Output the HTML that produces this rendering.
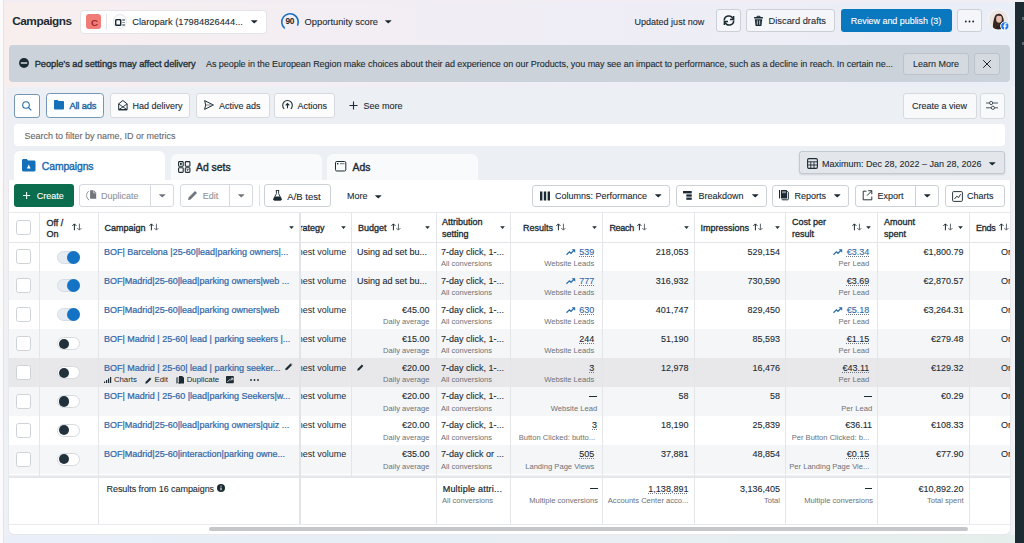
<!DOCTYPE html>
<html><head><meta charset="utf-8">
<style>
*{box-sizing:border-box;margin:0;padding:0}
html,body{width:1024px;height:543px;overflow:hidden}
body{position:relative;font-family:"Liberation Sans",sans-serif;color:#1c2b33;font-size:9px;
background:linear-gradient(90deg,#f8eeee 0%,#f3eef3 30%,#efedf5 55%,#eaeef7 100%)}
.a{position:absolute}
.t{position:absolute;white-space:nowrap}
.n{-webkit-text-stroke:0.1px currentColor}
.s{-webkit-text-stroke:0}
.sb{-webkit-text-stroke:0.32px currentColor}
svg{position:absolute;overflow:visible}
</style></head><body>

<div class="a" style="left:4px;top:86px;width:5px;height:457px;background:linear-gradient(180deg,#f3eff3 0%,#eff0f5 60%,#edf1f7 100%)"></div>
<div class="a" style="left:0px;top:0px;width:4px;height:543px;background:#fbfbfc;border-right:1px solid #e2e2e8"></div>
<div class="a" style="left:4px;top:0px;width:1011px;height:2px;background:#f1edf3"></div>
<div class="t" style="left:12.2px;top:15.61px;font-size:11.8px;line-height:11.8px;font-weight:bold;letter-spacing:-0.25px;color:#1c2b33;letter-spacing:-0.45px;">Campaigns</div>
<div class="a" style="left:79.8px;top:9.5px;width:187.2px;height:24.5px;background:#fff;border:1px solid #e2e4e8;border-radius:4px"></div>
<div class="a" style="left:86.2px;top:14.2px;width:15.099999999999994px;height:15.100000000000001px;background:#f07c78;border-radius:3px"></div>
<div class="t" style="left:90.9px;top:17.70px;font-size:9.8px;line-height:9.8px;font-weight:bold;letter-spacing:-0.25px;color:#a3262a;">C</div>
<div class="a" style="left:106.2px;top:13.7px;width:0.7999999999999972px;height:15.900000000000002px;background:#e3e5e8"></div>
<div class="a" style="left:112.6px;top:14.2px;width:14.200000000000003px;height:14.8px;background:#fafbfc;border:1px solid #e6e8eb;border-radius:50%"></div>
<svg style="left:114.6px;top:18.5px" width="11" height="7" viewBox="0 0 11 7"><rect x=".7" y=".7" width="5" height="5.6" rx=".6" fill="none" stroke="#1c2b33" stroke-width="1.4"/><path d="M2.2 1.5h2v3.5l-1-.8-1 .8z" fill="#fff"/><path d="M7.3 1h2.6M7.3 6h2.6" stroke="#1c2b33" stroke-width="1.1"/><path d="M7.3 3.5h2.6" stroke="#8a9197" stroke-width="1"/></svg>
<div class="t n" style="left:132.3px;top:18.33px;font-size:9.3px;line-height:9.3px;color:#1c2b33;">Claropark (17984826444...</div>
<svg style="left:251.2px;top:20.4px" width="6.5" height="3.64" viewBox="0 0 7 4"><path d="M.3.2h6.4c.25 0 .4.3.2.5L3.8 3.7c-.15.15-.45.15-.6 0L.1.7C-.1.5.05.2.3.2z" fill="#1c2b33"/></svg>
<svg style="left:280px;top:11.8px" width="20" height="20" viewBox="0 0 20 20"><path d="M4.3 15.95 A8.25 8.25 0 1 1 17.7 12.95" fill="none" stroke="#1a6fc4" stroke-width="1.6" stroke-linecap="round"/></svg>
<div class="t" style="left:285.5px;top:17.47px;font-size:8.3px;line-height:8.3px;font-weight:bold;letter-spacing:-0.25px;color:#1c2b33;letter-spacing:-0.3px;">90</div>
<div class="t n" style="left:304.6px;top:18.23px;font-size:9.3px;line-height:9.3px;color:#1c2b33;">Opportunity score</div>
<svg style="left:385.2px;top:20.4px" width="6.5" height="3.64" viewBox="0 0 7 4"><path d="M.3.2h6.4c.25 0 .4.3.2.5L3.8 3.7c-.15.15-.45.15-.6 0L.1.7C-.1.5.05.2.3.2z" fill="#1c2b33"/></svg>
<div class="t n" style="left:634.6px;top:17.68px;font-size:9px;line-height:9px;color:#1c2b33;">Updated just now</div>
<div class="a" style="left:716px;top:9px;width:25px;height:23px;border:1px solid #cbd0d6;border-radius:3px;background:#f8f9fb;background:#f5f6f9"></div>
<svg style="left:722.5px;top:15px" width="12" height="11" viewBox="0 0 12 11"><path d="M1.3 5.5A4.5 4.5 0 0 1 9.9 3.6" fill="none" stroke="#1c2b33" stroke-width="1.5"/><path d="M10.7 5.5A4.5 4.5 0 0 1 2.1 7.4" fill="none" stroke="#1c2b33" stroke-width="1.5"/><path d="M10.6 .9v3.6H7" fill="none" stroke="#1c2b33" stroke-width="1.5" stroke-linejoin="miter"/><path d="M1.4 10.1V6.5H5" fill="none" stroke="#1c2b33" stroke-width="1.5"/></svg>
<div class="a" style="left:746px;top:9px;width:89px;height:23px;border:1px solid #cbd0d6;border-radius:3px;background:#f8f9fb;background:#f5f6f9"></div>
<svg style="left:753.8px;top:15.8px" width="9" height="10" viewBox="0 0 9 10"><path d="M3 1V.3h3V1" fill="none" stroke="#1c2b33" stroke-width="1"/><rect x="0" y="1" width="9" height="1.6" rx=".5" fill="#1c2b33"/><path d="M.8 3.2h7.4l-.7 6.2c0 .3-.3.6-.7.6H2.2c-.4 0-.7-.3-.7-.6z" fill="#1c2b33"/><path d="M3.3 4.4v4.3M5.7 4.4v4.3" stroke="#eef1f6" stroke-width=".8"/></svg>
<div class="t n" style="left:768.6px;top:17.03px;font-size:9.3px;line-height:9.3px;color:#1c2b33;">Discard drafts</div>
<div class="a" style="left:841px;top:9px;width:111px;height:23px;background:#0a78be;border-radius:3px"></div>
<div class="t n" style="left:850.8px;top:17.08px;font-size:9px;line-height:9px;color:#fff;letter-spacing:-0.05px;">Review and publish (3)</div>
<div class="a" style="left:957px;top:9px;width:25px;height:23px;border:1px solid #cbd0d6;border-radius:3px;background:#f8f9fb;background:#f5f6f9"></div>
<svg style="left:963px;top:19.5px" width="13" height="3" viewBox="0 0 13 3"><circle cx="2.8" cy="1.5" r="0.95" fill="#1c2b33"/><circle cx="6.5" cy="1.5" r="0.95" fill="#1c2b33"/><circle cx="10.2" cy="1.5" r="0.95" fill="#1c2b33"/></svg>
<svg style="left:987.5px;top:9px" width="22" height="22" viewBox="0 0 22 22"><defs><clipPath id="av"><circle cx="10.5" cy="10.5" r="9.8"/></clipPath></defs><circle cx="10.5" cy="10.5" r="10.3" fill="#fff"/><g clip-path="url(#av)"><rect width="22" height="22" fill="#ece7e4"/><path d="M5 22c-.5-6 .5-12 2-15 1.2-2.3 5-3 7-.8 1.8 2 2 7 2.5 10 .3 2 .8 4 1.2 5.8z" fill="#3a271f"/><ellipse cx="11" cy="10" rx="2.9" ry="3.8" fill="#e2bfae"/><path d="M8 6.5c1.2-1.5 4.5-1.5 5.6.6-1.5-.3-3.5-.3-5.6-.6z" fill="#3a271f"/><path d="M7.5 22c.5-3 1.8-5 3.5-5.5s3 1 3.8 5.5z" fill="#2b2220"/></g><circle cx="16.8" cy="17" r="4.2" fill="#1877f2" stroke="#fff" stroke-width="1"/><path d="M17.4 21.2v-3.4h1.1l.2-1.2h-1.3v-.8c0-.35.12-.6.6-.6h.75v-1.05a7 7 0 0 0-1-.08c-1 0-1.6.6-1.6 1.6v.93h-1.05v1.2h1.05v3.4" fill="#fff"/></svg>
<div class="a" style="left:9px;top:45px;width:1001px;height:37px;background:#cbd2d9;border-radius:4px"></div>
<svg style="left:19px;top:58px" width="10" height="10" viewBox="0 0 10 10"><circle cx="5" cy="5" r="4.95" fill="#1c2b33"/><rect x="1.8" y="4.3" width="6.4" height="1.4" fill="#e4e8ec"/></svg>
<div class="t sb" style="left:34.7px;top:59.83px;font-size:9.3px;line-height:9.3px;color:#1c2b33;letter-spacing:-0.05px;">People’s ad settings may affect delivery</div>
<div class="t n" style="left:206px;top:60.08px;font-size:9px;line-height:9px;color:#1c2b33;letter-spacing:-0.055px;">As people in the European Region make choices about their ad experience on our Products, you may see an impact to performance, such as a decline in reach. In certain ne...</div>
<div class="a" style="left:903px;top:52.5px;width:66px;height:22.0px;border:1px solid #cbd0d6;border-radius:3px;background:#f8f9fb;background:#d4dae0;border-color:#bcc3cb"></div>
<div class="t n" style="left:913px;top:60.08px;font-size:9px;line-height:9px;color:#1c2b33;">Learn More</div>
<div class="a" style="left:974px;top:52.5px;width:26px;height:22.0px;border:1px solid #cbd0d6;border-radius:3px;background:#f8f9fb;background:#d4dae0;border-color:#bcc3cb"></div>
<svg style="left:982px;top:58.5px" width="10" height="10" viewBox="0 0 10 10"><path d="M1.2 1.2l7.6 7.6M8.8 1.2l-7.6 7.6" stroke="#1c2b33" stroke-width="1"/></svg>
<div class="a" style="left:7px;top:86.5px;width:1006px;height:93.5px;background:#eceff3;border-radius:6px 6px 0 0"></div>
<div class="a" style="left:14px;top:94px;width:26px;height:23.5px;background:#fff;border:1px solid #7596b3;border-radius:3px"></div>
<svg style="left:22px;top:101px" width="10" height="10" viewBox="0 0 10 10"><circle cx="4" cy="4" r="3.3" fill="none" stroke="#2a6ea6" stroke-width="1.1"/><path d="M6.4 6.4l2.9 2.9" stroke="#2a6ea6" stroke-width="1.2"/></svg>
<div class="a" style="left:46px;top:92.6px;width:58px;height:25.80000000000001px;background:#fbfdff;border:1px solid #7497b5;border-radius:3.5px"></div>
<svg style="left:53.7px;top:100.3px" width="10" height="9.4" viewBox="0 0 10 9.4"><path d="M0 1C0 .45.45 0 1 0h2.5l1.1 1.1H9c.55 0 1 .45 1 1v6.3c0 .55-.45 1-1 1H1c-.55 0-1-.45-1-1z" fill="#1470b8"/></svg>
<div class="t sb" style="left:69.4px;top:101.63px;font-size:9.3px;line-height:9.3px;color:#1a66a6;letter-spacing:-0.15px;-webkit-text-stroke:0.4px currentColor;">All ads</div>
<div class="a" style="left:109.5px;top:92.6px;width:80.5px;height:25.80000000000001px;background:#fcfcfd;border:1px solid #d6dadf;border-radius:3px"></div>
<svg style="left:117.5px;top:99.8px" width="10" height="10.5" viewBox="0 0 10 10.5"><path d="M.7 3.8L4.9.5l4.2 3.3v5.9H.7z" fill="none" stroke="#1c2b33" stroke-width="1"/><path d="M.7 3.8L4.9 6.9 9.1 3.8M.7 9.7L4.9 6.9 9.1 9.7" fill="none" stroke="#1c2b33" stroke-width=".9"/><path d="M.7 9.7h8.4" stroke="#1c2b33" stroke-width="1.2"/></svg>
<div class="t n" style="left:132.5px;top:101.88px;font-size:9px;line-height:9px;color:#1c2b33;">Had delivery</div>
<div class="a" style="left:195.5px;top:92.6px;width:74.5px;height:25.80000000000001px;background:#fcfcfd;border:1px solid #d6dadf;border-radius:3px"></div>
<svg style="left:204px;top:100px" width="10" height="10" viewBox="0 0 10 10"><path d="M.6.6L9.4 5 .6 9.4 1.7 5z" fill="none" stroke="#1c2b33" stroke-width="1" stroke-linejoin="round"/><path d="M1.7 5h7.7" stroke="#6d7379" stroke-width=".9"/></svg>
<div class="t n" style="left:219px;top:101.88px;font-size:9px;line-height:9px;color:#1c2b33;">Active ads</div>
<div class="a" style="left:273.8px;top:92.6px;width:61.39999999999998px;height:25.80000000000001px;background:#fcfcfd;border:1px solid #d6dadf;border-radius:3px"></div>
<svg style="left:282px;top:99.8px" width="11" height="10" viewBox="0 0 11 10"><path d="M2.2 8.8A4.8 4.8 0 1 1 8.8 8.8" fill="none" stroke="#1c2b33" stroke-width="1.1"/><path d="M5.5 8.2V3.5M3.7 5.3l1.8-1.8 1.8 1.8" fill="none" stroke="#1c2b33" stroke-width="1.1"/></svg>
<div class="t n" style="left:297.5px;top:101.58px;font-size:9px;line-height:9px;color:#1c2b33;">Actions</div>
<svg style="left:349px;top:101px" width="9" height="9" viewBox="0 0 9 9"><path d="M4.5 .5v8M.5 4.5h8" stroke="#1c2b33" stroke-width="1.1"/></svg>
<div class="t n" style="left:363.5px;top:102.08px;font-size:9px;line-height:9px;color:#1c2b33;">See more</div>
<div class="a" style="left:902.5px;top:92.5px;width:74.0px;height:26.0px;background:#f8f9fb;border:1px solid #d6dadf;border-radius:3px"></div>
<div class="t n" style="left:912px;top:102.38px;font-size:9px;line-height:9px;color:#1c2b33;">Create a view</div>
<div class="a" style="left:979.5px;top:92.5px;width:25.0px;height:26.0px;background:#f8f9fb;border:1px solid #d6dadf;border-radius:3px"></div>
<svg style="left:986px;top:101.2px" width="12" height="9" viewBox="0 0 12 9"><path d="M0 2h3.3M6.9 2H12M0 6.8h5.1M8.7 6.8H12" stroke="#1c2b33" stroke-width=".8"/><circle cx="5.1" cy="2" r="1.6" fill="none" stroke="#1c2b33" stroke-width=".8"/><circle cx="6.9" cy="6.8" r="1.6" fill="none" stroke="#1c2b33" stroke-width=".8"/></svg>
<div class="a" style="left:13.7px;top:123.6px;width:991.3px;height:22.900000000000006px;background:#fff;border-radius:4px"></div>
<div class="t n" style="left:24.4px;top:131.68px;font-size:9px;line-height:9px;color:#65676b;">Search to filter by name, ID or metrics</div>
<div class="a" style="left:14px;top:150.7px;width:151.3px;height:31.30000000000001px;background:#fff;border-radius:6px 6px 0 0"></div>
<svg style="left:22.2px;top:159.1px" width="13.5" height="12.4" viewBox="0 0 13.5 12.4"><path d="M0 1.3C0 .6.6 0 1.3 0h3.4l1.4 1.6h6.1c.7 0 1.3.6 1.3 1.3v8.2c0 .7-.6 1.3-1.3 1.3H1.3C.6 12.4 0 11.8 0 11.1z" fill="#1470b8"/><path d="M6.75 5.4L8.6 9.4H4.9z" fill="#fff"/></svg>
<div class="t sb" style="left:41.8px;top:162.40px;font-size:10.4px;line-height:10.4px;color:#1a6aae;letter-spacing:-0.1px;-webkit-text-stroke:0.38px currentColor;">Campaigns</div>
<div class="a" style="left:171px;top:154px;width:151.2px;height:26px;background:#f9fafb;border-radius:6px 6px 0 0"></div>
<svg style="left:178px;top:160.5px" width="12.5" height="12" viewBox="0 0 12.5 12"><rect x=".6" y=".6" width="4.6" height="4.6" rx=".8" fill="none" stroke="#1c2b33" stroke-width="1.1"/><rect x="7.3" y=".6" width="4.6" height="4.6" rx=".8" fill="none" stroke="#1c2b33" stroke-width="1.1"/><rect x=".6" y="6.8" width="4.6" height="4.6" rx=".8" fill="none" stroke="#1c2b33" stroke-width="1.1"/><rect x="7.3" y="6.8" width="4.6" height="4.6" rx=".8" fill="none" stroke="#1c2b33" stroke-width="1.1"/><rect x="2" y="2" width="1.8" height="1.8" fill="#1c2b33"/><path d="M8.3 8.3h2.6l-1.3 1.8z" fill="#1c2b33"/></svg>
<div class="t sb" style="left:196px;top:162.60px;font-size:10.4px;line-height:10.4px;color:#1c2b33;-webkit-text-stroke:0.38px currentColor;">Ad sets</div>
<div class="a" style="left:327.3px;top:154px;width:150.39999999999998px;height:26px;background:#f9fafb;border-radius:6px 6px 0 0"></div>
<svg style="left:335.3px;top:161.1px" width="11.3" height="10.5" viewBox="0 0 11.3 10.5"><rect x=".5" y=".5" width="10.3" height="9.5" rx="1.3" fill="none" stroke="#1c2b33" stroke-width="1"/><rect x="2" y="2" width="1.4" height="1.4" fill="#1c2b33"/><path d="M5 2.7h4.5" stroke="#6d7379" stroke-width="1"/></svg>
<div class="t sb" style="left:352.5px;top:162.60px;font-size:10.4px;line-height:10.4px;color:#1c2b33;-webkit-text-stroke:0.38px currentColor;">Ads</div>
<div class="a" style="left:799.4px;top:151.3px;width:205.60000000000002px;height:23.0px;background:#e3e7ec;border:1px solid #c3c9d0;border-radius:3px;box-shadow:0 1px 2px rgba(0,0,0,.12)"></div>
<svg style="left:807px;top:157.5px" width="11" height="11" viewBox="0 0 11 11"><rect x=".6" y=".6" width="9.8" height="9.8" rx="1.3" fill="none" stroke="#1c2b33" stroke-width="1.1"/><path d="M.6 3.8h9.8M.6 7h9.8M3.8 3.8v6.6M7 3.8v6.6" stroke="#1c2b33" stroke-width=".9"/></svg>
<div class="t n" style="left:822px;top:159.58px;font-size:9px;line-height:9px;color:#1c2b33;">Maximum: Dec 28, 2022 – Jan 28, 2026</div>
<svg style="left:988.5px;top:161.5px" width="6.5" height="3.64" viewBox="0 0 7 4"><path d="M.3.2h6.4c.25 0 .4.3.2.5L3.8 3.7c-.15.15-.45.15-.6 0L.1.7C-.1.5.05.2.3.2z" fill="#1c2b33"/></svg>
<div class="a" style="left:7.5px;top:180px;width:1003.0px;height:354.79999999999995px;background:#fff;border:1px solid #e6e8ec;border-top:none;border-radius:0 0 6px 6px"></div>
<div class="a" style="left:14px;top:184px;width:60px;height:22.5px;background:#0b6c4e;border-radius:3px"></div>
<svg style="left:23px;top:192.3px" width="7.2" height="7" viewBox="0 0 7.2 7"><path d="M3.6 0v7M0 3.5h7.2" stroke="#eafaf3" stroke-width="1.1"/></svg>
<div class="t n" style="left:36.8px;top:192.08px;font-size:9px;line-height:9px;color:#fff;">Create</div>
<div class="a" style="left:79px;top:184px;width:95.4px;height:22.5px;background:#fff;border:1px solid #d6dadf;border-radius:3px"></div>
<div class="a" style="left:150px;top:184.5px;width:1px;height:21.5px;background:#d6dadf"></div>
<svg style="left:86px;top:190.3px" width="11" height="10.5" viewBox="0 0 11 10.5"><path d="M4.1.2h3.6l2.5 2.6v6H4.1z" fill="#6f757b"/><path d="M7.5.2v2.8h2.7" fill="none" stroke="#fff" stroke-width=".5"/><path d="M2.6 1.2C1 2.5.6 4 .6 5.5s.5 3.3 2.6 4.6" fill="none" stroke="#7d8389" stroke-width=".9"/></svg>
<div class="t n" style="left:101px;top:192.08px;font-size:9px;line-height:9px;color:#8d949b;">Duplicate</div>
<svg style="left:159px;top:194.2px" width="6.5" height="3.64" viewBox="0 0 7 4"><path d="M.3.2h6.4c.25 0 .4.3.2.5L3.8 3.7c-.15.15-.45.15-.6 0L.1.7C-.1.5.05.2.3.2z" fill="#70767d"/></svg>
<div class="a" style="left:180.3px;top:184px;width:72.89999999999998px;height:22.5px;background:#fff;border:1px solid #d6dadf;border-radius:3px"></div>
<div class="a" style="left:228.5px;top:184.5px;width:1.0px;height:21.5px;background:#d6dadf"></div>
<svg style="left:187px;top:190px" width="11" height="11" viewBox="0 0 11 11"><path d="M1 10l.6-2.6L8 1l2 2-6.4 6.4z" fill="#70767d"/></svg>
<div class="t n" style="left:202.7px;top:192.08px;font-size:9px;line-height:9px;color:#8d949b;">Edit</div>
<svg style="left:238.3px;top:194.2px" width="6.5" height="3.64" viewBox="0 0 7 4"><path d="M.3.2h6.4c.25 0 .4.3.2.5L3.8 3.7c-.15.15-.45.15-.6 0L.1.7C-.1.5.05.2.3.2z" fill="#70767d"/></svg>
<div class="a" style="left:258.8px;top:185px;width:1.0px;height:21px;background:#dcdfe3"></div>
<div class="a" style="left:264.2px;top:184px;width:67.0px;height:22.5px;background:#fff;border:1px solid #cdd2d8;border-radius:3px"></div>
<svg style="left:272.5px;top:190.2px" width="9" height="10.5" viewBox="0 0 9 10.5"><path d="M2.8.5h3.4M3.4.5v3.2L.7 8.8c-.4.8 0 1.4.8 1.4h6c.8 0 1.2-.6.8-1.4L5.6 3.7V.5" fill="none" stroke="#1c2b33" stroke-width=".9"/><path d="M1.9 6.6h5.2l1.4 2.4c.3.6 0 1.2-.7 1.2H1.2c-.7 0-1-.6-.7-1.2z" fill="#1c2b33"/></svg>
<div class="t n" style="left:287.3px;top:191.66px;font-size:9.5px;line-height:9.5px;color:#1c2b33;">A/B test</div>
<div class="t n" style="left:347px;top:192.08px;font-size:9px;line-height:9px;color:#1c2b33;">More</div>
<svg style="left:374.5px;top:194.5px" width="6.5" height="3.64" viewBox="0 0 7 4"><path d="M.3.2h6.4c.25 0 .4.3.2.5L3.8 3.7c-.15.15-.45.15-.6 0L.1.7C-.1.5.05.2.3.2z" fill="#1c2b33"/></svg>
<div class="a" style="left:532.2px;top:184.5px;width:137.79999999999995px;height:22.5px;background:#fff;border:1px solid #cdd2d8;border-radius:3px"></div>
<svg style="left:540px;top:190.5px" width="10" height="10" viewBox="0 0 10 10"><rect x="0" y=".5" width="2.4" height="9" fill="#1c2b33"/><rect x="3.8" y=".5" width="2.4" height="9" fill="#1c2b33"/><rect x="7.6" y=".5" width="2.4" height="9" fill="#1c2b33"/></svg>
<div class="t n" style="left:555px;top:192.38px;font-size:9px;line-height:9px;color:#1c2b33;">Columns: Performance</div>
<svg style="left:654.5px;top:194.3px" width="6.5" height="3.64" viewBox="0 0 7 4"><path d="M.3.2h6.4c.25 0 .4.3.2.5L3.8 3.7c-.15.15-.45.15-.6 0L.1.7C-.1.5.05.2.3.2z" fill="#1c2b33"/></svg>
<div class="a" style="left:675.5px;top:184.5px;width:91.10000000000002px;height:22.5px;background:#fff;border:1px solid #cdd2d8;border-radius:3px"></div>
<svg style="left:683.2px;top:191.1px" width="9" height="9" viewBox="0 0 9 9"><rect x="0" y="0" width="8.7" height="2.4" fill="#1c2b33"/><rect x="3.4" y="2.4" width="5.3" height="6.3" fill="#9aa0a6"/><rect x="3.4" y="3.7" width="5.3" height="1.7" fill="#1c2b33"/><rect x="3.4" y="7" width="5.3" height="1.7" fill="#1c2b33"/></svg>
<div class="t n" style="left:698.5px;top:192.38px;font-size:9px;line-height:9px;color:#1c2b33;">Breakdown</div>
<svg style="left:751.5px;top:194.3px" width="6.5" height="3.64" viewBox="0 0 7 4"><path d="M.3.2h6.4c.25 0 .4.3.2.5L3.8 3.7c-.15.15-.45.15-.6 0L.1.7C-.1.5.05.2.3.2z" fill="#1c2b33"/></svg>
<div class="a" style="left:771.7px;top:184.5px;width:77.79999999999995px;height:22.5px;background:#fff;border:1px solid #cdd2d8;border-radius:3px"></div>
<svg style="left:779px;top:190.3px" width="11" height="10" viewBox="0 0 11 10"><rect x="0" y="0" width="1.1" height="8.4" fill="#1c2b33"/><path d="M7 1.6h1.6c.4 0 .7.3.7.7v6.8c0 .4-.3.7-.7.7H3.6c-.4 0-.7-.3-.7-.7V9" fill="none" stroke="#1c2b33" stroke-width="1"/><rect x="2" y="0" width="6" height="8.6" rx=".6" fill="#1c2b33"/><rect x="3" y="1.2" width="4" height="2" fill="#8b939a"/></svg>
<div class="t n" style="left:794.5px;top:192.38px;font-size:9px;line-height:9px;color:#1c2b33;">Reports</div>
<svg style="left:834.3px;top:194.3px" width="6.5" height="3.64" viewBox="0 0 7 4"><path d="M.3.2h6.4c.25 0 .4.3.2.5L3.8 3.7c-.15.15-.45.15-.6 0L.1.7C-.1.5.05.2.3.2z" fill="#1c2b33"/></svg>
<div class="a" style="left:854.7px;top:184.5px;width:84.29999999999995px;height:22.5px;background:#fff;border:1px solid #cdd2d8;border-radius:3px"></div>
<div class="a" style="left:914.5px;top:185px;width:1.0px;height:21.5px;background:#cdd2d8"></div>
<svg style="left:862px;top:190px" width="11" height="11" viewBox="0 0 11 11"><path d="M4.5 1.2H1.2v8.6H9.8V6.5" fill="none" stroke="#1c2b33" stroke-width=".95"/><path d="M6.2 .7h3.6v3.6M9.7.9L5 5.6" fill="none" stroke="#1c2b33" stroke-width=".95"/></svg>
<div class="t n" style="left:877.5px;top:192.38px;font-size:9px;line-height:9px;color:#1c2b33;">Export</div>
<svg style="left:924px;top:194.3px" width="6.5" height="3.64" viewBox="0 0 7 4"><path d="M.3.2h6.4c.25 0 .4.3.2.5L3.8 3.7c-.15.15-.45.15-.6 0L.1.7C-.1.5.05.2.3.2z" fill="#1c2b33"/></svg>
<div class="a" style="left:944.7px;top:184.5px;width:59.89999999999998px;height:22.5px;background:#fff;border:1px solid #cdd2d8;border-radius:3px"></div>
<svg style="left:951.5px;top:190.5px" width="11" height="11" viewBox="0 0 11 11"><rect x=".6" y=".6" width="9.8" height="9.8" rx="1" fill="none" stroke="#1c2b33" stroke-width=".95"/><path d="M2.5 8l2.3-2.8 1.8 1.3L8.6 3.2" fill="none" stroke="#1c2b33" stroke-width=".95"/></svg>
<div class="t n" style="left:967px;top:192.38px;font-size:9px;line-height:9px;color:#1c2b33;">Charts</div>
<div class="a" style="left:9px;top:271.3px;width:1001px;height:28.899999999999977px;background:#f5f6f8"></div>
<div class="a" style="left:9px;top:329.1px;width:1001px;height:28.899999999999977px;background:#f5f6f8"></div>
<div class="a" style="left:9px;top:358.0px;width:1001px;height:28.899999999999977px;background:#e8e8ea"></div>
<div class="a" style="left:9px;top:386.9px;width:1001px;height:28.899999999999977px;background:#f5f6f8"></div>
<div class="a" style="left:9px;top:444.7px;width:1001px;height:28.899999999999977px;background:#f5f6f8"></div>
<div class="a" style="left:9px;top:212px;width:1001px;height:1px;background:#e6e8eb"></div>
<div class="a" style="left:9px;top:241.8px;width:1001px;height:1.0px;background:#e3e5e8"></div>
<div class="a" style="left:9px;top:475.2px;width:1001px;height:2.400000000000034px;background:linear-gradient(180deg,#f1f2f4,#dfe1e4)"></div>
<div class="a" style="left:9px;top:523.5px;width:1001px;height:1.0px;background:#e8eaed"></div>
<div class="a" style="left:38.9px;top:212px;width:1.0px;height:264px;background:#e3e5e8"></div>
<div class="a" style="left:97.9px;top:212px;width:1.0px;height:312px;background:#e3e5e8"></div>
<div class="a" style="left:351.0px;top:212px;width:1.0px;height:264px;background:#e3e5e8"></div>
<div class="a" style="left:435.7px;top:212px;width:1.0px;height:312px;background:#e3e5e8"></div>
<div class="a" style="left:510.0px;top:212px;width:1.0px;height:312px;background:#e3e5e8"></div>
<div class="a" style="left:601.8px;top:212px;width:1.0px;height:312px;background:#e3e5e8"></div>
<div class="a" style="left:693.7px;top:212px;width:1.0px;height:312px;background:#e3e5e8"></div>
<div class="a" style="left:784.9px;top:212px;width:1.0px;height:312px;background:#e3e5e8"></div>
<div class="a" style="left:876.8px;top:212px;width:1.0px;height:312px;background:#e3e5e8"></div>
<div class="a" style="left:968.9px;top:212px;width:1.0px;height:312px;background:#e3e5e8"></div>
<div class="a" style="left:299.3px;top:212px;width:1.599999999999966px;height:312px;background:#e2e4e7"></div>
<div class="a" style="left:16.3px;top:220px;width:15.0px;height:15px;background:#fff;border:1px solid #cfd3d8;border-radius:2.5px"></div>
<div class="t sb" style="left:46.5px;top:218.58px;font-size:9px;line-height:9px;color:#1c2b33;">Off /</div>
<div class="t sb" style="left:46.5px;top:230.08px;font-size:9px;line-height:9px;color:#1c2b33;">On</div>
<svg style="left:72.2px;top:223px" width="10" height="8" viewBox="0 0 10 8"><path d="M2.4 7.3V.9M.4 2.9l2-2 2 2" fill="none" stroke="#1c2b33" stroke-width="1"/><path d="M7.4.7v6.4M5.4 5.1l2 2 2-2" fill="none" stroke="#5f666d" stroke-width="1"/></svg>
<div class="t sb" style="left:104.5px;top:224.08px;font-size:9px;line-height:9px;color:#1c2b33;">Campaign</div>
<svg style="left:149.1px;top:223px" width="10" height="8" viewBox="0 0 10 8"><path d="M2.4 7.3V.9M.4 2.9l2-2 2 2" fill="none" stroke="#1c2b33" stroke-width="1"/><path d="M7.4.7v6.4M5.4 5.1l2 2 2-2" fill="none" stroke="#5f666d" stroke-width="1"/></svg>
<svg style="left:289px;top:226px" width="5" height="3" viewBox="0 0 5 3"><path d="M.2.2h4.6L2.5 2.9z" fill="#1c2b33"/></svg>
<div class="a" style="left:300.8px;top:219px;width:40px;height:16px;overflow:hidden"><div class="t sb" style="right:16.2px;top:5.08px;font-size:9px;line-height:9px">Strategy</div></div>
<svg style="left:341.2px;top:226px" width="5" height="3" viewBox="0 0 5 3"><path d="M.2.2h4.6L2.5 2.9z" fill="#1c2b33"/></svg>
<div class="t sb" style="left:358px;top:224.08px;font-size:9px;line-height:9px;color:#1c2b33;">Budget</div>
<svg style="left:390.6px;top:223px" width="10" height="8" viewBox="0 0 10 8"><path d="M2.4 7.3V.9M.4 2.9l2-2 2 2" fill="none" stroke="#1c2b33" stroke-width="1"/><path d="M7.4.7v6.4M5.4 5.1l2 2 2-2" fill="none" stroke="#5f666d" stroke-width="1"/></svg>
<svg style="left:424.5px;top:226px" width="5" height="3" viewBox="0 0 5 3"><path d="M.2.2h4.6L2.5 2.9z" fill="#1c2b33"/></svg>
<div class="t sb" style="left:442px;top:218.38px;font-size:9px;line-height:9px;color:#1c2b33;">Attribution</div>
<div class="t sb" style="left:442px;top:229.58px;font-size:9px;line-height:9px;color:#1c2b33;">setting</div>
<svg style="left:499.5px;top:226px" width="5" height="3" viewBox="0 0 5 3"><path d="M.2.2h4.6L2.5 2.9z" fill="#1c2b33"/></svg>
<div class="t sb" style="left:523px;top:224.08px;font-size:9px;line-height:9px;color:#1c2b33;">Results</div>
<svg style="left:555.6px;top:223px" width="10" height="8" viewBox="0 0 10 8"><path d="M2.4 7.3V.9M.4 2.9l2-2 2 2" fill="none" stroke="#1c2b33" stroke-width="1"/><path d="M7.4.7v6.4M5.4 5.1l2 2 2-2" fill="none" stroke="#5f666d" stroke-width="1"/></svg>
<svg style="left:592.2px;top:226px" width="5" height="3" viewBox="0 0 5 3"><path d="M.2.2h4.6L2.5 2.9z" fill="#1c2b33"/></svg>
<div class="t sb" style="left:609.4px;top:224.08px;font-size:9px;line-height:9px;color:#1c2b33;letter-spacing:-0.3px;">Reach</div>
<svg style="left:637px;top:223px" width="10" height="8" viewBox="0 0 10 8"><path d="M2.4 7.3V.9M.4 2.9l2-2 2 2" fill="none" stroke="#1c2b33" stroke-width="1"/><path d="M7.4.7v6.4M5.4 5.1l2 2 2-2" fill="none" stroke="#5f666d" stroke-width="1"/></svg>
<svg style="left:683.6px;top:226px" width="5" height="3" viewBox="0 0 5 3"><path d="M.2.2h4.6L2.5 2.9z" fill="#1c2b33"/></svg>
<div class="t sb" style="left:700.6px;top:224.08px;font-size:9px;line-height:9px;color:#1c2b33;">Impressions</div>
<svg style="left:752.9px;top:223px" width="10" height="8" viewBox="0 0 10 8"><path d="M2.4 7.3V.9M.4 2.9l2-2 2 2" fill="none" stroke="#1c2b33" stroke-width="1"/><path d="M7.4.7v6.4M5.4 5.1l2 2 2-2" fill="none" stroke="#5f666d" stroke-width="1"/></svg>
<svg style="left:774.7px;top:226px" width="5" height="3" viewBox="0 0 5 3"><path d="M.2.2h4.6L2.5 2.9z" fill="#1c2b33"/></svg>
<div class="t sb" style="left:792px;top:218.38px;font-size:9px;line-height:9px;color:#1c2b33;">Cost per</div>
<div class="t sb" style="left:792px;top:229.58px;font-size:9px;line-height:9px;color:#1c2b33;">result</div>
<svg style="left:851.5px;top:223px" width="10" height="8" viewBox="0 0 10 8"><path d="M2.4 7.3V.9M.4 2.9l2-2 2 2" fill="none" stroke="#1c2b33" stroke-width="1"/><path d="M7.4.7v6.4M5.4 5.1l2 2 2-2" fill="none" stroke="#5f666d" stroke-width="1"/></svg>
<svg style="left:865.5px;top:226px" width="5" height="3" viewBox="0 0 5 3"><path d="M.2.2h4.6L2.5 2.9z" fill="#1c2b33"/></svg>
<div class="t sb" style="left:884px;top:218.38px;font-size:9px;line-height:9px;color:#1c2b33;">Amount</div>
<div class="t sb" style="left:884px;top:229.58px;font-size:9px;line-height:9px;color:#1c2b33;">spent</div>
<svg style="left:943.4px;top:223px" width="10" height="8" viewBox="0 0 10 8"><path d="M2.4 7.3V.9M.4 2.9l2-2 2 2" fill="none" stroke="#1c2b33" stroke-width="1"/><path d="M7.4.7v6.4M5.4 5.1l2 2 2-2" fill="none" stroke="#5f666d" stroke-width="1"/></svg>
<svg style="left:957.5px;top:226px" width="5" height="3" viewBox="0 0 5 3"><path d="M.2.2h4.6L2.5 2.9z" fill="#1c2b33"/></svg>
<div class="t sb" style="left:976px;top:224.08px;font-size:9px;line-height:9px;color:#1c2b33;letter-spacing:-0.25px;">Ends</div>
<svg style="left:999.3px;top:223px" width="10" height="8" viewBox="0 0 10 8"><path d="M2.4 7.3V.9M.4 2.9l2-2 2 2" fill="none" stroke="#1c2b33" stroke-width="1"/><path d="M7.4.7v6.4M5.4 5.1l2 2 2-2" fill="none" stroke="#5f666d" stroke-width="1"/></svg>
<div class="a" style="left:16.3px;top:249.4px;width:15.0px;height:14.999999999999972px;background:#fff;border:1px solid #cfd3d8;border-radius:2.5px"></div>
<div class="a" style="left:57.2px;top:250.5px;width:23.0px;height:13.0px;background:#e7ecf2;border:1px solid #d6dce3;border-radius:7px"></div>
<div class="a" style="left:67.4px;top:250.5px;width:12.799999999999997px;height:13.0px;background:#1573c5;border-radius:50%"></div>
<div class="t n" style="left:104px;top:247.98px;font-size:9px;line-height:9px;color:#3267a8;-webkit-text-stroke:0.22px currentColor;">BOF| Barcelona |25-60|lead|parking owners|...</div>
<div class="a" style="left:300.8px;top:242.9px;width:50px;height:15px;overflow:hidden"><div class="t" style="right:4.5px;top:5.08px;font-size:9px;line-height:9px;letter-spacing:0px">Highest volume</div></div>
<div class="t n" style="left:357px;top:247.98px;font-size:9px;line-height:9px;color:#1c2b33;">Using ad set bu...</div>
<div class="t n" style="left:441px;top:247.98px;font-size:9px;line-height:9px;color:#1c2b33;">7-day click, 1-...</div>
<div class="t s" style="left:441px;top:260.47px;font-size:7.6px;line-height:7.6px;color:#6d7176;">All conversions</div>
<div class="t n" style="right:429.70000000000005px;top:247.98px;font-size:9px;line-height:9px;color:#3267a8;text-align:right;text-decoration:underline dotted #6f7a85;text-decoration-thickness:1px;text-underline-offset:1.2px;">539</div>
<svg style="left:565.9px;top:248.9px" width="9.5" height="6.2" viewBox="0 0 9.5 6.2"><path d="M.5 5.7l2.9-2.9 1.6 1.5L8.4 .9" fill="none" stroke="#2a6ca8" stroke-width="1.25"/><path d="M5.6.3h3.6v3.4z" fill="#2a6ca8"/></svg>
<div class="t s" style="right:429.70000000000005px;top:260.47px;font-size:7.6px;line-height:7.6px;color:#6d7176;text-align:right;">Website Leads</div>
<div class="t n" style="right:335.6px;top:247.98px;font-size:9px;line-height:9px;color:#1c2b33;text-align:right;">218,053</div>
<div class="t n" style="right:244px;top:247.98px;font-size:9px;line-height:9px;color:#1c2b33;text-align:right;">529,154</div>
<div class="t n" style="right:154.70000000000005px;top:247.98px;font-size:9px;line-height:9px;color:#3267a8;text-align:right;text-decoration:underline dotted #6f7a85;text-decoration-thickness:1px;text-underline-offset:1.2px;">€3.34</div>
<svg style="left:833.3px;top:248.9px" width="9.5" height="6.2" viewBox="0 0 9.5 6.2"><path d="M.5 5.7l2.9-2.9 1.6 1.5L8.4 .9" fill="none" stroke="#2a6ca8" stroke-width="1.25"/><path d="M5.6.3h3.6v3.4z" fill="#2a6ca8"/></svg>
<div class="t s" style="right:154.70000000000005px;top:260.47px;font-size:7.6px;line-height:7.6px;color:#6d7176;text-align:right;">Per Lead</div>
<div class="t n" style="right:60.39999999999998px;top:247.98px;font-size:9px;line-height:9px;color:#1c2b33;text-align:right;">€1,800.79</div>
<div class="t n" style="left:1001px;top:247.98px;font-size:9px;line-height:9px;color:#1c2b33;width:9px;overflow:hidden;">Or</div>
<div class="a" style="left:16.3px;top:278.3px;width:15.0px;height:15.0px;background:#fff;border:1px solid #cfd3d8;border-radius:2.5px"></div>
<div class="a" style="left:57.2px;top:279.40000000000003px;width:23.0px;height:13.0px;background:#e7ecf2;border:1px solid #d6dce3;border-radius:7px"></div>
<div class="a" style="left:67.4px;top:279.40000000000003px;width:12.799999999999997px;height:13.0px;background:#1573c5;border-radius:50%"></div>
<div class="t n" style="left:104px;top:276.88px;font-size:9px;line-height:9px;color:#3267a8;-webkit-text-stroke:0.22px currentColor;">BOF|Madrid|25-60|lead|parking owners|web ...</div>
<div class="a" style="left:300.8px;top:271.8px;width:50px;height:15px;overflow:hidden"><div class="t" style="right:4.5px;top:5.08px;font-size:9px;line-height:9px;letter-spacing:0px">Highest volume</div></div>
<div class="t n" style="left:357px;top:276.88px;font-size:9px;line-height:9px;color:#1c2b33;">Using ad set bu...</div>
<div class="t n" style="left:441px;top:276.88px;font-size:9px;line-height:9px;color:#1c2b33;">7-day click, 1-...</div>
<div class="t s" style="left:441px;top:289.37px;font-size:7.6px;line-height:7.6px;color:#6d7176;">All conversions</div>
<div class="t n" style="right:429.70000000000005px;top:276.88px;font-size:9px;line-height:9px;color:#3267a8;text-align:right;text-decoration:underline dotted #6f7a85;text-decoration-thickness:1px;text-underline-offset:1.2px;">777</div>
<svg style="left:565.9px;top:277.8px" width="9.5" height="6.2" viewBox="0 0 9.5 6.2"><path d="M.5 5.7l2.9-2.9 1.6 1.5L8.4 .9" fill="none" stroke="#2a6ca8" stroke-width="1.25"/><path d="M5.6.3h3.6v3.4z" fill="#2a6ca8"/></svg>
<div class="t s" style="right:429.70000000000005px;top:289.37px;font-size:7.6px;line-height:7.6px;color:#6d7176;text-align:right;">Website Leads</div>
<div class="t n" style="right:335.6px;top:276.88px;font-size:9px;line-height:9px;color:#1c2b33;text-align:right;">316,932</div>
<div class="t n" style="right:244px;top:276.88px;font-size:9px;line-height:9px;color:#1c2b33;text-align:right;">730,590</div>
<div class="t n" style="right:154.70000000000005px;top:276.88px;font-size:9px;line-height:9px;color:#1c2b33;text-align:right;text-decoration:underline dotted #6f7a85;text-decoration-thickness:1px;text-underline-offset:1.2px;">€3.69</div>
<div class="t s" style="right:154.70000000000005px;top:289.37px;font-size:7.6px;line-height:7.6px;color:#6d7176;text-align:right;">Per Lead</div>
<div class="t n" style="right:60.39999999999998px;top:276.88px;font-size:9px;line-height:9px;color:#1c2b33;text-align:right;">€2,870.57</div>
<div class="t n" style="left:1001px;top:276.88px;font-size:9px;line-height:9px;color:#1c2b33;width:9px;overflow:hidden;">Or</div>
<div class="a" style="left:16.3px;top:307.2px;width:15.0px;height:15.0px;background:#fff;border:1px solid #cfd3d8;border-radius:2.5px"></div>
<div class="a" style="left:57.2px;top:308.3px;width:23.0px;height:13.0px;background:#e7ecf2;border:1px solid #d6dce3;border-radius:7px"></div>
<div class="a" style="left:67.4px;top:308.3px;width:12.799999999999997px;height:13.0px;background:#1573c5;border-radius:50%"></div>
<div class="t n" style="left:104px;top:305.78px;font-size:9px;line-height:9px;color:#3267a8;-webkit-text-stroke:0.22px currentColor;">BOF|Madrid|25-60|lead|parking owners|web</div>
<div class="a" style="left:300.8px;top:300.7px;width:50px;height:15px;overflow:hidden"><div class="t" style="right:4.5px;top:5.08px;font-size:9px;line-height:9px;letter-spacing:0px">Highest volume</div></div>
<div class="t n" style="right:594.5px;top:305.78px;font-size:9px;line-height:9px;color:#1c2b33;text-align:right;">€45.00</div>
<div class="t s" style="right:594.5px;top:318.27px;font-size:7.6px;line-height:7.6px;color:#6d7176;text-align:right;">Daily average</div>
<div class="t n" style="left:441px;top:305.78px;font-size:9px;line-height:9px;color:#1c2b33;">7-day click, 1-...</div>
<div class="t s" style="left:441px;top:318.27px;font-size:7.6px;line-height:7.6px;color:#6d7176;">All conversions</div>
<div class="t n" style="right:429.70000000000005px;top:305.78px;font-size:9px;line-height:9px;color:#3267a8;text-align:right;text-decoration:underline dotted #6f7a85;text-decoration-thickness:1px;text-underline-offset:1.2px;">630</div>
<svg style="left:565.9px;top:306.7px" width="9.5" height="6.2" viewBox="0 0 9.5 6.2"><path d="M.5 5.7l2.9-2.9 1.6 1.5L8.4 .9" fill="none" stroke="#2a6ca8" stroke-width="1.25"/><path d="M5.6.3h3.6v3.4z" fill="#2a6ca8"/></svg>
<div class="t s" style="right:429.70000000000005px;top:318.27px;font-size:7.6px;line-height:7.6px;color:#6d7176;text-align:right;">Website Leads</div>
<div class="t n" style="right:335.6px;top:305.78px;font-size:9px;line-height:9px;color:#1c2b33;text-align:right;">401,747</div>
<div class="t n" style="right:244px;top:305.78px;font-size:9px;line-height:9px;color:#1c2b33;text-align:right;">829,450</div>
<div class="t n" style="right:154.70000000000005px;top:305.78px;font-size:9px;line-height:9px;color:#3267a8;text-align:right;text-decoration:underline dotted #6f7a85;text-decoration-thickness:1px;text-underline-offset:1.2px;">€5.18</div>
<svg style="left:833.3px;top:306.7px" width="9.5" height="6.2" viewBox="0 0 9.5 6.2"><path d="M.5 5.7l2.9-2.9 1.6 1.5L8.4 .9" fill="none" stroke="#2a6ca8" stroke-width="1.25"/><path d="M5.6.3h3.6v3.4z" fill="#2a6ca8"/></svg>
<div class="t s" style="right:154.70000000000005px;top:318.27px;font-size:7.6px;line-height:7.6px;color:#6d7176;text-align:right;">Per Lead</div>
<div class="t n" style="right:60.39999999999998px;top:305.78px;font-size:9px;line-height:9px;color:#1c2b33;text-align:right;">€3,264.31</div>
<div class="t n" style="left:1001px;top:305.78px;font-size:9px;line-height:9px;color:#1c2b33;width:9px;overflow:hidden;">Or</div>
<div class="a" style="left:16.3px;top:336.1px;width:15.0px;height:15.0px;background:#fff;border:1px solid #cfd3d8;border-radius:2.5px"></div>
<div class="a" style="left:57.2px;top:337.20000000000005px;width:23.0px;height:13.0px;background:#fff;border:1px solid #d6dadf;border-radius:7px"></div>
<div class="a" style="left:58.6px;top:338.6px;width:10.199999999999996px;height:10.200000000000045px;background:#22323d;border-radius:50%"></div>
<div class="t n" style="left:104px;top:334.68px;font-size:9px;line-height:9px;color:#3267a8;-webkit-text-stroke:0.22px currentColor;">BOF| Madrid | 25-60| lead | parking seekers |...</div>
<div class="a" style="left:300.8px;top:329.6px;width:50px;height:15px;overflow:hidden"><div class="t" style="right:4.5px;top:5.08px;font-size:9px;line-height:9px;letter-spacing:0px">Highest volume</div></div>
<div class="t n" style="right:594.5px;top:334.68px;font-size:9px;line-height:9px;color:#1c2b33;text-align:right;">€15.00</div>
<div class="t s" style="right:594.5px;top:347.17px;font-size:7.6px;line-height:7.6px;color:#6d7176;text-align:right;">Daily average</div>
<div class="t n" style="left:441px;top:334.68px;font-size:9px;line-height:9px;color:#1c2b33;">7-day click, 1-...</div>
<div class="t s" style="left:441px;top:347.17px;font-size:7.6px;line-height:7.6px;color:#6d7176;">All conversions</div>
<div class="t n" style="right:429.70000000000005px;top:334.68px;font-size:9px;line-height:9px;color:#1c2b33;text-align:right;text-decoration:underline dotted #6f7a85;text-decoration-thickness:1px;text-underline-offset:1.2px;">244</div>
<div class="t s" style="right:429.70000000000005px;top:347.17px;font-size:7.6px;line-height:7.6px;color:#6d7176;text-align:right;">Website Leads</div>
<div class="t n" style="right:335.6px;top:334.68px;font-size:9px;line-height:9px;color:#1c2b33;text-align:right;">51,190</div>
<div class="t n" style="right:244px;top:334.68px;font-size:9px;line-height:9px;color:#1c2b33;text-align:right;">85,593</div>
<div class="t n" style="right:154.70000000000005px;top:334.68px;font-size:9px;line-height:9px;color:#1c2b33;text-align:right;text-decoration:underline dotted #6f7a85;text-decoration-thickness:1px;text-underline-offset:1.2px;">€1.15</div>
<div class="t s" style="right:154.70000000000005px;top:347.17px;font-size:7.6px;line-height:7.6px;color:#6d7176;text-align:right;">Per Lead</div>
<div class="t n" style="right:60.39999999999998px;top:334.68px;font-size:9px;line-height:9px;color:#1c2b33;text-align:right;">€279.48</div>
<div class="t n" style="left:1001px;top:334.68px;font-size:9px;line-height:9px;color:#1c2b33;width:9px;overflow:hidden;">Or</div>
<div class="a" style="left:16.3px;top:365.0px;width:15.0px;height:15.0px;background:#fff;border:1px solid #cfd3d8;border-radius:2.5px"></div>
<div class="a" style="left:57.2px;top:366.1px;width:23.0px;height:13.0px;background:#fff;border:1px solid #d6dadf;border-radius:7px"></div>
<div class="a" style="left:58.6px;top:367.5px;width:10.199999999999996px;height:10.200000000000045px;background:#22323d;border-radius:50%"></div>
<div class="t n" style="left:104px;top:363.58px;font-size:9px;line-height:9px;color:#3267a8;-webkit-text-stroke:0.22px currentColor;">BOF| Madrid | 25-60| lead | parking seeker...</div>
<div class="a" style="left:300.8px;top:358.5px;width:50px;height:15px;overflow:hidden"><div class="t" style="right:4.5px;top:5.08px;font-size:9px;line-height:9px;letter-spacing:0px">Highest volume</div></div>
<div class="t n" style="right:594.5px;top:363.58px;font-size:9px;line-height:9px;color:#1c2b33;text-align:right;">€20.00</div>
<div class="t s" style="right:594.5px;top:376.07px;font-size:7.6px;line-height:7.6px;color:#6d7176;text-align:right;">Daily average</div>
<div class="t n" style="left:441px;top:363.58px;font-size:9px;line-height:9px;color:#1c2b33;">7-day click, 1-...</div>
<div class="t s" style="left:441px;top:376.07px;font-size:7.6px;line-height:7.6px;color:#6d7176;">All conversions</div>
<div class="t n" style="right:429.70000000000005px;top:363.58px;font-size:9px;line-height:9px;color:#1c2b33;text-align:right;text-decoration:underline dotted #6f7a85;text-decoration-thickness:1px;text-underline-offset:1.2px;">3</div>
<div class="t s" style="right:429.70000000000005px;top:376.07px;font-size:7.6px;line-height:7.6px;color:#6d7176;text-align:right;">Website Leads</div>
<div class="t n" style="right:335.6px;top:363.58px;font-size:9px;line-height:9px;color:#1c2b33;text-align:right;">12,978</div>
<div class="t n" style="right:244px;top:363.58px;font-size:9px;line-height:9px;color:#1c2b33;text-align:right;">16,476</div>
<div class="t n" style="right:154.70000000000005px;top:363.58px;font-size:9px;line-height:9px;color:#1c2b33;text-align:right;text-decoration:underline dotted #6f7a85;text-decoration-thickness:1px;text-underline-offset:1.2px;">€43.11</div>
<div class="t s" style="right:154.70000000000005px;top:376.07px;font-size:7.6px;line-height:7.6px;color:#6d7176;text-align:right;">Per Lead</div>
<div class="t n" style="right:60.39999999999998px;top:363.58px;font-size:9px;line-height:9px;color:#1c2b33;text-align:right;">€129.32</div>
<div class="t n" style="left:1001px;top:363.58px;font-size:9px;line-height:9px;color:#1c2b33;width:9px;overflow:hidden;">Or</div>
<div class="a" style="left:16.3px;top:393.9px;width:15.0px;height:15.0px;background:#fff;border:1px solid #cfd3d8;border-radius:2.5px"></div>
<div class="a" style="left:57.2px;top:395.0px;width:23.0px;height:13.0px;background:#fff;border:1px solid #d6dadf;border-radius:7px"></div>
<div class="a" style="left:58.6px;top:396.4px;width:10.199999999999996px;height:10.200000000000045px;background:#22323d;border-radius:50%"></div>
<div class="t n" style="left:104px;top:392.48px;font-size:9px;line-height:9px;color:#3267a8;-webkit-text-stroke:0.22px currentColor;">BOF| Madrid | 25-60 |lead|parking Seekers|w...</div>
<div class="a" style="left:300.8px;top:387.4px;width:50px;height:15px;overflow:hidden"><div class="t" style="right:4.5px;top:5.08px;font-size:9px;line-height:9px;letter-spacing:0px">Highest volume</div></div>
<div class="t n" style="right:594.5px;top:392.48px;font-size:9px;line-height:9px;color:#1c2b33;text-align:right;">€20.00</div>
<div class="t s" style="right:594.5px;top:404.97px;font-size:7.6px;line-height:7.6px;color:#6d7176;text-align:right;">Daily average</div>
<div class="t n" style="left:441px;top:392.48px;font-size:9px;line-height:9px;color:#1c2b33;">7-day click, 1-...</div>
<div class="t s" style="left:441px;top:404.97px;font-size:7.6px;line-height:7.6px;color:#6d7176;">All conversions</div>
<div class="a" style="left:589.2px;top:395.79999999999995px;width:7.7999999999999545px;height:1.3000000000000114px;background:#1c2b33"></div>
<div class="t n" style="right:426.9000000000001px;top:392.48px;font-size:9px;line-height:9px;color:#1c2b33;text-align:right;"></div>
<div class="t s" style="right:426.9000000000001px;top:404.97px;font-size:7.6px;line-height:7.6px;color:#6d7176;text-align:right;">Website Lead</div>
<div class="t n" style="right:335.6px;top:392.48px;font-size:9px;line-height:9px;color:#1c2b33;text-align:right;">58</div>
<div class="t n" style="right:244px;top:392.48px;font-size:9px;line-height:9px;color:#1c2b33;text-align:right;">58</div>
<div class="a" style="left:864px;top:395.79999999999995px;width:7.7999999999999545px;height:1.3000000000000114px;background:#1c2b33"></div>
<div class="t n" style="right:151.9000000000001px;top:392.48px;font-size:9px;line-height:9px;color:#1c2b33;text-align:right;"></div>
<div class="t s" style="right:151.9000000000001px;top:404.97px;font-size:7.6px;line-height:7.6px;color:#6d7176;text-align:right;">Per Lead</div>
<div class="t n" style="right:60.39999999999998px;top:392.48px;font-size:9px;line-height:9px;color:#1c2b33;text-align:right;">€0.29</div>
<div class="t n" style="left:1001px;top:392.48px;font-size:9px;line-height:9px;color:#1c2b33;width:9px;overflow:hidden;">Or</div>
<div class="a" style="left:16.3px;top:422.79999999999995px;width:15.0px;height:15.0px;background:#fff;border:1px solid #cfd3d8;border-radius:2.5px"></div>
<div class="a" style="left:57.2px;top:423.9px;width:23.0px;height:13.0px;background:#fff;border:1px solid #d6dadf;border-radius:7px"></div>
<div class="a" style="left:58.6px;top:425.29999999999995px;width:10.199999999999996px;height:10.200000000000045px;background:#22323d;border-radius:50%"></div>
<div class="t n" style="left:104px;top:421.38px;font-size:9px;line-height:9px;color:#3267a8;-webkit-text-stroke:0.22px currentColor;">BOF|Madrid|25-60|lead|parking owners|quiz ...</div>
<div class="a" style="left:300.8px;top:416.29999999999995px;width:50px;height:15px;overflow:hidden"><div class="t" style="right:4.5px;top:5.08px;font-size:9px;line-height:9px;letter-spacing:0px">Highest volume</div></div>
<div class="t n" style="right:594.5px;top:421.38px;font-size:9px;line-height:9px;color:#1c2b33;text-align:right;">€20.00</div>
<div class="t s" style="right:594.5px;top:433.87px;font-size:7.6px;line-height:7.6px;color:#6d7176;text-align:right;">Daily average</div>
<div class="t n" style="left:441px;top:421.38px;font-size:9px;line-height:9px;color:#1c2b33;">7-day click, 1-...</div>
<div class="t s" style="left:441px;top:433.87px;font-size:7.6px;line-height:7.6px;color:#6d7176;">All conversions</div>
<div class="t n" style="right:426.9000000000001px;top:421.38px;font-size:9px;line-height:9px;color:#1c2b33;text-align:right;text-decoration:underline dotted #6f7a85;text-decoration-thickness:1px;text-underline-offset:1.2px;">3</div>
<div class="t s" style="right:428.9000000000001px;top:433.87px;font-size:7.6px;line-height:7.6px;color:#6d7176;text-align:right;">Button Clicked: butto...</div>
<div class="t n" style="right:335.6px;top:421.38px;font-size:9px;line-height:9px;color:#1c2b33;text-align:right;">18,190</div>
<div class="t n" style="right:244px;top:421.38px;font-size:9px;line-height:9px;color:#1c2b33;text-align:right;">25,839</div>
<div class="t n" style="right:151.9000000000001px;top:421.38px;font-size:9px;line-height:9px;color:#1c2b33;text-align:right;">€36.11</div>
<div class="t s" style="right:154.70000000000005px;top:433.87px;font-size:7.6px;line-height:7.6px;color:#6d7176;text-align:right;">Per Button Clicked: b...</div>
<div class="t n" style="right:60.39999999999998px;top:421.38px;font-size:9px;line-height:9px;color:#1c2b33;text-align:right;">€108.33</div>
<div class="t n" style="left:1001px;top:421.38px;font-size:9px;line-height:9px;color:#1c2b33;width:9px;overflow:hidden;">Or</div>
<div class="a" style="left:16.3px;top:451.7px;width:15.0px;height:15.0px;background:#fff;border:1px solid #cfd3d8;border-radius:2.5px"></div>
<div class="a" style="left:57.2px;top:452.8px;width:23.0px;height:13.0px;background:#fff;border:1px solid #d6dadf;border-radius:7px"></div>
<div class="a" style="left:58.6px;top:454.2px;width:10.199999999999996px;height:10.200000000000045px;background:#22323d;border-radius:50%"></div>
<div class="t n" style="left:104px;top:450.28px;font-size:9px;line-height:9px;color:#3267a8;-webkit-text-stroke:0.22px currentColor;">BOF|Madrid|25-60|interaction|parking owne...</div>
<div class="a" style="left:300.8px;top:445.2px;width:50px;height:15px;overflow:hidden"><div class="t" style="right:4.5px;top:5.08px;font-size:9px;line-height:9px;letter-spacing:0px">Highest volume</div></div>
<div class="t n" style="right:594.5px;top:450.28px;font-size:9px;line-height:9px;color:#1c2b33;text-align:right;">€35.00</div>
<div class="t s" style="right:594.5px;top:462.77px;font-size:7.6px;line-height:7.6px;color:#6d7176;text-align:right;">Daily average</div>
<div class="t n" style="left:441px;top:450.28px;font-size:9px;line-height:9px;color:#1c2b33;">7-day click or ...</div>
<div class="t s" style="left:441px;top:462.77px;font-size:7.6px;line-height:7.6px;color:#6d7176;">All conversions</div>
<div class="t n" style="right:429.70000000000005px;top:450.28px;font-size:9px;line-height:9px;color:#1c2b33;text-align:right;text-decoration:underline dotted #6f7a85;text-decoration-thickness:1px;text-underline-offset:1.2px;">505</div>
<div class="t s" style="right:429.70000000000005px;top:462.77px;font-size:7.6px;line-height:7.6px;color:#6d7176;text-align:right;">Landing Page Views</div>
<div class="t n" style="right:335.6px;top:450.28px;font-size:9px;line-height:9px;color:#1c2b33;text-align:right;">37,881</div>
<div class="t n" style="right:244px;top:450.28px;font-size:9px;line-height:9px;color:#1c2b33;text-align:right;">48,854</div>
<div class="t n" style="right:154.70000000000005px;top:450.28px;font-size:9px;line-height:9px;color:#1c2b33;text-align:right;text-decoration:underline dotted #6f7a85;text-decoration-thickness:1px;text-underline-offset:1.2px;">€0.15</div>
<div class="t s" style="right:154.70000000000005px;top:462.77px;font-size:7.6px;line-height:7.6px;color:#6d7176;text-align:right;">Per Landing Page Vie...</div>
<div class="t n" style="right:60.39999999999998px;top:450.28px;font-size:9px;line-height:9px;color:#1c2b33;text-align:right;">€77.90</div>
<div class="t n" style="left:1001px;top:450.28px;font-size:9px;line-height:9px;color:#1c2b33;width:9px;overflow:hidden;">Or</div>
<svg style="left:284.7px;top:362.6px" width="7.5" height="7.5" viewBox="0 0 8 8"><path d="M.3 7.7l.5-2.2L5.6.7l1.7 1.7-4.8 4.8z" fill="#1c2b33"/><path d="M6 .3l1.7 1.7" stroke="#1c2b33" stroke-width=".8"/></svg>
<svg style="left:103.6px;top:377.4px" width="7.5" height="6" viewBox="0 0 7.5 6"><path d="M.6 6V4.5M2.6 6V3M4.6 6V1.5M6.6 6V0" stroke="#1c2b33" stroke-width="1.2"/></svg>
<div class="t s" style="left:113.9px;top:376.40px;font-size:7.8px;line-height:7.8px;color:#1c2b33;">Charts</div>
<svg style="left:144.8px;top:376.5px" width="7" height="7" viewBox="0 0 8 8"><path d="M.3 7.7l.5-2.2L5.6.7l1.7 1.7-4.8 4.8z" fill="#1c2b33"/></svg>
<div class="t s" style="left:154.5px;top:376.40px;font-size:7.8px;line-height:7.8px;color:#1c2b33;">Edit</div>
<svg style="left:176px;top:376.3px" width="8" height="7.5" viewBox="0 0 8 7.5"><path d="M3 0h3.2L8 1.8v5.7H3z" fill="#1c2b33"/><path d="M1.8 1v6h3" fill="none" stroke="#1c2b33" stroke-width=".8"/><path d="M.5 1.5v6" stroke="#1c2b33" stroke-width=".6"/></svg>
<div class="t s" style="left:186.7px;top:376.40px;font-size:7.8px;line-height:7.8px;color:#1c2b33;">Duplicate</div>
<svg style="left:226.3px;top:376.1px" width="7.8" height="7.3" viewBox="0 0 8 7.5"><rect x="0" y="0" width="8" height="7.5" rx=".8" fill="#1c2b33"/><path d="M1.5 6L4 3.5l1 1L6.8 2.6" fill="none" stroke="#e9eaec" stroke-width=".9"/><path d="M5 2.3h2v2" fill="none" stroke="#e9eaec" stroke-width=".8"/></svg>
<svg style="left:249.8px;top:378.8px" width="9" height="2" viewBox="0 0 9 2"><circle cx="1" cy="1" r=".9" fill="#1c2b33"/><circle cx="4.5" cy="1" r=".9" fill="#1c2b33"/><circle cx="8" cy="1" r=".9" fill="#1c2b33"/></svg>
<svg style="left:356.5px;top:363.5px" width="7" height="7" viewBox="0 0 8 8"><path d="M.3 7.7l.5-2.2L5.6.7l1.7 1.7-4.8 4.8z" fill="#1c2b33"/></svg>
<div class="t n" style="left:106.5px;top:484.58px;font-size:9px;line-height:9px;color:#1c2b33;letter-spacing:-0.06px;">Results from 16 campaigns</div>
<svg style="left:216.8px;top:484px" width="8" height="8" viewBox="0 0 8 8"><circle cx="4" cy="4" r="4" fill="#1c2b33"/><path d="M4 3.4v2.8" stroke="#fff" stroke-width="1.1"/><circle cx="4" cy="2.1" r=".6" fill="#fff"/></svg>
<div class="t n" style="left:442.7px;top:484.68px;font-size:9px;line-height:9px;color:#1c2b33;letter-spacing:0.2px;-webkit-text-stroke:0.22px currentColor;">Multiple attri...</div>
<div class="t s" style="left:442px;top:497.27px;font-size:7.6px;line-height:7.6px;color:#6d7176;">All conversions</div>
<div class="a" style="left:590px;top:487.9px;width:7.7999999999999545px;height:1.3000000000000114px;background:#1c2b33"></div>
<div class="t s" style="right:426px;top:497.27px;font-size:7.6px;line-height:7.6px;color:#6d7176;text-align:right;">Multiple conversions</div>
<div class="t n" style="right:335.6px;top:484.58px;font-size:9px;line-height:9px;color:#1c2b33;text-align:right;text-decoration:underline dotted #6f7a85;text-decoration-thickness:1px;text-underline-offset:1.2px;">1,138,891</div>
<div class="t s" style="right:335.6px;top:497.27px;font-size:7.6px;line-height:7.6px;color:#6d7176;text-align:right;">Accounts Center acco...</div>
<div class="t n" style="right:244px;top:484.58px;font-size:9px;line-height:9px;color:#1c2b33;text-align:right;">3,136,405</div>
<div class="t s" style="right:244px;top:497.27px;font-size:7.6px;line-height:7.6px;color:#6d7176;text-align:right;">Total</div>
<div class="a" style="left:864.5px;top:487.9px;width:7.7999999999999545px;height:1.3000000000000114px;background:#1c2b33"></div>
<div class="t s" style="right:151px;top:497.27px;font-size:7.6px;line-height:7.6px;color:#6d7176;text-align:right;">Multiple conversions</div>
<div class="t n" style="right:60.39999999999998px;top:484.58px;font-size:9px;line-height:9px;color:#1c2b33;text-align:right;">€10,892.20</div>
<div class="t s" style="right:60.39999999999998px;top:497.27px;font-size:7.6px;line-height:7.6px;color:#6d7176;text-align:right;">Total spent</div>
<div class="a" style="left:208.6px;top:527.2px;width:759.4px;height:4.099999999999909px;background:#c4c6c9;border-radius:3px"></div>
<div class="a" style="left:4.5px;top:535px;width:1010.3px;height:8px;background:linear-gradient(90deg,#e9eef8,#e8eef4 60%,#e6eeeb)"></div>
<div class="a" style="left:1010.5px;top:86px;width:4.2999999999999545px;height:449px;background:#f0f2f6"></div>
<div class="a" style="left:1014.8px;top:0px;width:9.200000000000045px;height:543px;background:#1c2a32"></div>
<div class="a" style="left:1014.8px;top:0px;width:9.200000000000045px;height:1.7px;background:#eef0f4"></div>
<div class="a" style="left:1022.3px;top:16.6px;width:1.7000000000000455px;height:3.3999999999999986px;background:#5d6971"></div>
<div class="a" style="left:1022.3px;top:41.5px;width:1.7000000000000455px;height:3.5px;background:#5d6971"></div>
</body></html>
